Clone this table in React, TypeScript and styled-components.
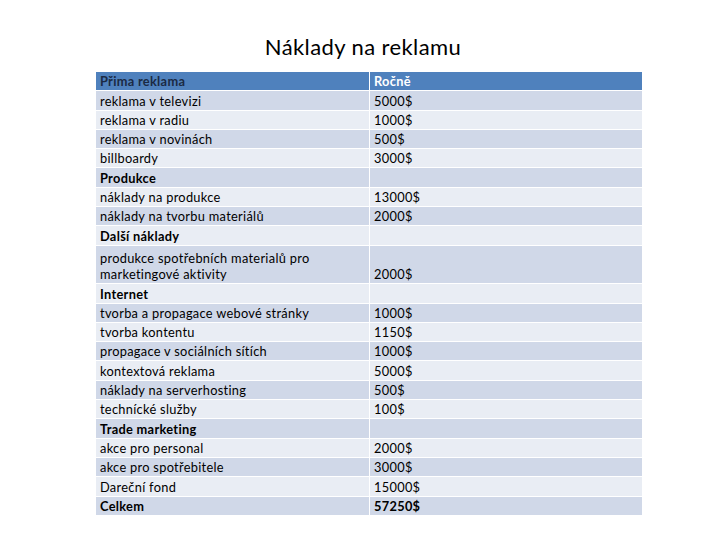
import { createGlobalStyle, styled } from "styled-components";

const GlobalStyle = createGlobalStyle`
  html, body {
    margin: 0;
    padding: 0;
    background: #ffffff;
  }
  body {
    font-family: "Lato", "Open Sans", "Liberation Sans", sans-serif;
    color: #000;
  }
`;

const Page = styled.div`
  width: 720px;
  height: 540px;
  display: flex;
  flex-direction: column;
  align-items: center;
  padding-top: 34px;
  box-sizing: border-box;
`;

const Title = styled.h1`
  margin: 0 0 12px 6px;
  font-family: "Lato", "Open Sans", "Liberation Sans", sans-serif;
  font-weight: 400;
  font-size: 22px;
  line-height: 26px;
  letter-spacing: 0.4px;
`;

const Table = styled.div`
  width: 546px;
  margin-left: 18px;
  display: flex;
  flex-direction: column;
`;

const Row = styled.div<{ $kind: "head" | "dark" | "light"; $lines?: number }>`
  display: grid;
  grid-template-columns: 273px 1fr;
  height: ${(p) => 19.3 * (p.$lines ?? 1)}px;
  box-sizing: border-box;
  border-bottom: 1px solid #ffffff;
  background: ${(p) =>
    p.$kind === "head" ? "#4f81bd" : p.$kind === "dark" ? "#d0d8e8" : "#e9edf4"};
`;

const Cell = styled.div<{ $bold?: boolean; $head?: boolean; $right?: boolean }>`
  display: flex;
  align-items: flex-end;
  padding: 0 0 1px 4px;
  font-size: 12.8px;
  line-height: 16px;
  letter-spacing: 0.3px;
  font-weight: ${(p) => (p.$bold ? 700 : 400)};
  color: ${(p) => (p.$head ? (p.$right ? "#ffffff" : "#1b2a44") : "#000")};
  border-left: ${(p) => (p.$right ? "1px solid #ffffff" : "none")};
  white-space: pre-line;
`;

type Item = { label: string; value?: string; bold?: boolean; lines?: number };

const items: Item[] = [
  { label: "reklama v televizi", value: "5000$" },
  { label: "reklama v radiu", value: "1000$" },
  { label: "reklama v novinách", value: "500$" },
  { label: "billboardy", value: "3000$" },
  { label: "Produkce", bold: true },
  { label: "náklady na produkce", value: "13000$" },
  { label: "náklady na tvorbu materiálů", value: "2000$" },
  { label: "Další náklady", bold: true },
  {
    label: "produkce spotřebních materialů pro\nmarketingové aktivity",
    value: "2000$",
    lines: 2,
  },
  { label: "Internet", bold: true },
  { label: "tvorba a propagace webové stránky", value: "1000$" },
  { label: "tvorba kontentu", value: "1150$" },
  { label: "propagace v sociálních sítích", value: "1000$" },
  { label: "kontextová reklama", value: "5000$" },
  { label: "náklady na serverhosting", value: "500$" },
  { label: "technícké služby", value: "100$" },
  { label: "Trade marketing", bold: true },
  { label: "akce pro personal", value: "2000$" },
  { label: "akce pro spotřebitele", value: "3000$" },
  { label: "Dareční fond", value: "15000$" },
  { label: "Celkem", value: "57250$", bold: true },
];

export default function App() {
  return (
    <>
      <GlobalStyle />
      <Page>
        <Title>Náklady na reklamu</Title>
        <Table>
          <Row $kind="head">
            <Cell $bold $head>
              Přima reklama
            </Cell>
            <Cell $bold $head $right>
              Ročně
            </Cell>
          </Row>
          {items.map((it, i) => (
            <Row key={i} $kind={i % 2 === 0 ? "dark" : "light"} $lines={it.lines}>
              <Cell $bold={it.bold}>{it.label}</Cell>
              <Cell $bold={it.bold} $right>
                {it.value ?? ""}
              </Cell>
            </Row>
          ))}
        </Table>
      </Page>
    </>
  );
}
